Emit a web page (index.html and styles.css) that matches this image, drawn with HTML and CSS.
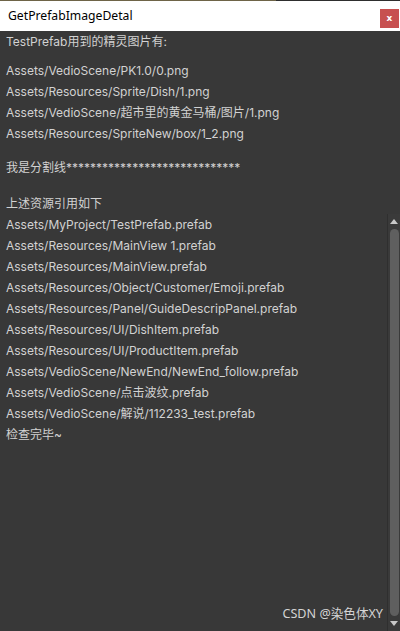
FILE: index.html
```html
<!DOCTYPE html>
<html>
<head>
<meta charset="utf-8">
<link rel="stylesheet" href="styles.css">
</head>
<body>
<div class="window">
  <div class="topline"></div>
  <div class="titlebar">
    <span class="title">GetPrefabImageDetal</span>
    <span class="close">x</span>
  </div>
  <div class="content">
    <div class="line">TestPrefab用到的精灵图片有:</div>
    <div class="group sprites">
      <div class="line">Assets/VedioScene/PK1.0/0.png</div>
      <div class="line">Assets/Resources/Sprite/Dish/1.png</div>
      <div class="line">Assets/VedioScene/超市里的黄金马桶/图片/1.png</div>
      <div class="line">Assets/Resources/SpriteNew/box/1_2.png</div>
    </div>
    <div class="line divider">我是分割线*****************************</div>
    <div class="line refs">上述资源引用如下</div>
    <div class="scrollview">
      <div class="scrollbody">
        <div class="line">Assets/MyProject/TestPrefab.prefab</div>
        <div class="line">Assets/Resources/MainView 1.prefab</div>
        <div class="line">Assets/Resources/MainView.prefab</div>
        <div class="line">Assets/Resources/Object/Customer/Emoji.prefab</div>
        <div class="line">Assets/Resources/Panel/GuideDescripPanel.prefab</div>
        <div class="line">Assets/Resources/UI/DishItem.prefab</div>
        <div class="line">Assets/Resources/UI/ProductItem.prefab</div>
        <div class="line">Assets/VedioScene/NewEnd/NewEnd_follow.prefab</div>
        <div class="line">Assets/VedioScene/点击波纹.prefab</div>
        <div class="line">Assets/VedioScene/解说/112233_test.prefab</div>
        <div class="line">检查完毕~</div>
      </div>
      <div class="scrollbar">
        <div class="arrow up"></div>
        <div class="thumb"></div>
        <div class="arrow down"></div>
      </div>
    </div>
  </div>
  <div class="watermark">CSDN @染色体XY</div>
</div>
</body>
</html>
```
FILE: styles.css
```css
html, body {
  margin: 0;
  padding: 0;
  background: #383838;
}
.window {
  position: relative;
  width: 400px;
  height: 631px;
  display: flex;
  flex-direction: column;
  overflow: hidden;
  background: #383838;
}
.topline {
  height: 1px;
  background: linear-gradient(to right, #6e6448 0, #6e6448 276px, #2e2e2e 276px);
}
.titlebar {
  height: 30px;
  background: #ffffff;
  display: flex;
  align-items: center;
  justify-content: space-between;
  padding-left: 8px;
  box-sizing: border-box;
}
.title {
  font-family: "Noto Sans", "Open Sans", sans-serif;
  font-size: 12.2px;
  color: #000;
  margin-top: -1px;
}
.close {
  width: 19px;
  height: 19px;
  margin-right: 1px;
  margin-top: 4px;
  background: #c75050;
  color: #fff;
  font-family: "DejaVu Sans", sans-serif;
  font-weight: bold;
  font-size: 9px;
  display: flex;
  align-items: center;
  justify-content: center;
  line-height: 1;
}
.content {
  flex: 1;
  display: flex;
  flex-direction: column;
  min-height: 0;
  font-family: Inter, "Noto Sans CJK SC", sans-serif;
  font-size: 12px;
  color: #d2d2d2;
}
.line {
  height: 21px;
  line-height: 21px;
  padding-left: 6px;
  white-space: nowrap;
}
.sprites {
  margin-top: 8px;
}
.divider {
  margin-top: 13px;
}
.refs {
  margin-top: 15px;
}
.scrollview {
  flex: 1;
  display: flex;
  min-height: 0;
}
.scrollbody {
  flex: 1;
}
.scrollbar {
  width: 12px;
  background: #3a3a3a;
  border-left: 1px solid #2f2f2f;
  display: flex;
  flex-direction: column;
  align-items: center;
  padding: 5px 0 5px 0;
}
.arrow {
  width: 0;
  height: 0;
  border-left: 4px solid transparent;
  border-right: 4px solid transparent;
}
.arrow.up {
  border-bottom: 5px solid #c8c8c8;
}
.arrow.down {
  border-top: 5px solid #c8c8c8;
}
.thumb {
  flex: 1;
  width: 9px;
  margin: 5px 0;
  background: #5f5f5f;
  border-radius: 5px;
}
.watermark {
  position: absolute;
  right: 17px;
  bottom: 9px;
  font-family: "Noto Sans", "Noto Sans CJK SC", sans-serif;
  font-size: 12.6px;
  color: #d4d4d4;
}
```
